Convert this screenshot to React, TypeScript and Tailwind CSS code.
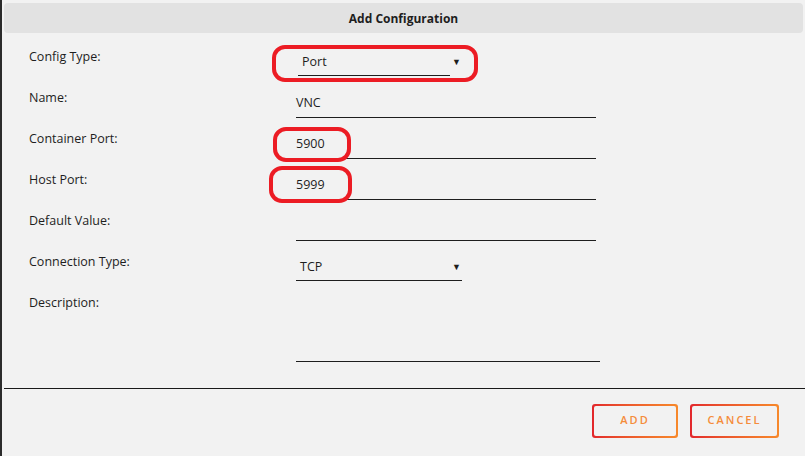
import { ReactNode } from "react";

// rows of the "Add Configuration" form
const fields: { label: string; kind: "text" | "select" | "area"; value?: string; line?: string; mark?: string }[] = [
  { label: "Config Type:", kind: "select", value: "Port", line: "w-[152px] ml-[2px]", mark: "config" },
  { label: "Name:", kind: "text", value: "VNC" },
  { label: "Container Port:", kind: "text", value: "5900", mark: "container" },
  { label: "Host Port:", kind: "text", value: "5999", mark: "host" },
  { label: "Default Value:", kind: "text", value: "" },
  { label: "Connection Type:", kind: "select", value: "TCP", line: "w-[166px]" },
  { label: "Description:", kind: "area", value: "" },
];

function Ring({ className }: { className: string }) {
  return (
    <div
      className={`pointer-events-none absolute border-[4px] border-[#ec1c24] rounded-[13px] ${className}`}
    />
  );
}

function Field({ kind, value, line, mark }: { kind: string; value?: string; line?: string; mark?: string }) {
  let body: ReactNode;
  if (kind === "select") {
    body = (
      <div className="relative w-[166px] h-[27px] text-[12.5px] text-[#1e1e1e]">
        <div className={`h-full border-b border-[#1e1e1e] flex items-center pl-[4px] ${line}`}>{value}</div>
        <span className="absolute right-[1px] top-[8px] text-[9px] leading-none">▼</span>
      </div>
    );
  } else if (kind === "area") {
    body = <div className="w-[304px] h-[67px] border-b border-[#1e1e1e]" />;
  } else {
    body = (
      <div className="w-[300px] h-[28px] border-b border-[#1e1e1e] flex items-center text-[12.5px] text-[#1e1e1e]">
        {value}
      </div>
    );
  }

  return (
    <div className="relative">
      {body}
      {mark === "config" && <Ring className="left-[-24px] top-[-4px] w-[206px] h-[37px]" />}
      {mark === "container" && <Ring className="left-[-23px] top-[-4px] w-[78px] h-[35px]" />}
      {mark === "host" && <Ring className="left-[-27px] top-[-6px] w-[83px] h-[37px]" />}
    </div>
  );
}

function OutlineButton({ label, width }: { label: string; width: string }) {
  return (
    <div className={`${width} h-[34px] p-[2px] rounded-[3px] bg-gradient-to-r from-[#e2262c] to-[#f7892b]`}>
      <div className="w-full h-full rounded-[2px] bg-[#f2f2f2] flex items-center justify-center pb-[1px] text-[11px] font-semibold tracking-[2px] text-[#f58c3a]">
        {label}
      </div>
    </div>
  );
}

export default function App() {
  return (
    <div className="w-[805px] h-[456px] overflow-hidden bg-[#f2f2f2] border-l-2 border-[#2b2b2b] font-['Open_Sans',sans-serif] text-[#1e1e1e]">
      <div className="mx-[2px] mt-[3px] h-[30px] pt-[2px] rounded-[4px] bg-[#e2e2e2] flex items-center justify-center text-[12px] font-bold">
        Add Configuration
      </div>

      <div className="mt-[16px] pl-[27px] flex flex-col">
        {fields.map((f) => (
          <div
            key={f.label}
            className={`grid grid-cols-[267px_1fr] ${f.kind === "area" ? "h-[93px]" : "h-[41px]"}`}
          >
            <div className="text-[12.5px] leading-[16px]">{f.label}</div>
            <Field kind={f.kind} value={f.value} line={f.line} mark={f.mark} />
          </div>
        ))}
      </div>

      <div className="ml-[2px] h-[1px] bg-[#1a1a1a]" />

      <div className="flex justify-end gap-[12px] pt-[15px] pr-[26px]">
        <OutlineButton label="ADD" width="w-[86px]" />
        <OutlineButton label="CANCEL" width="w-[89px]" />
      </div>
    </div>
  );
}
